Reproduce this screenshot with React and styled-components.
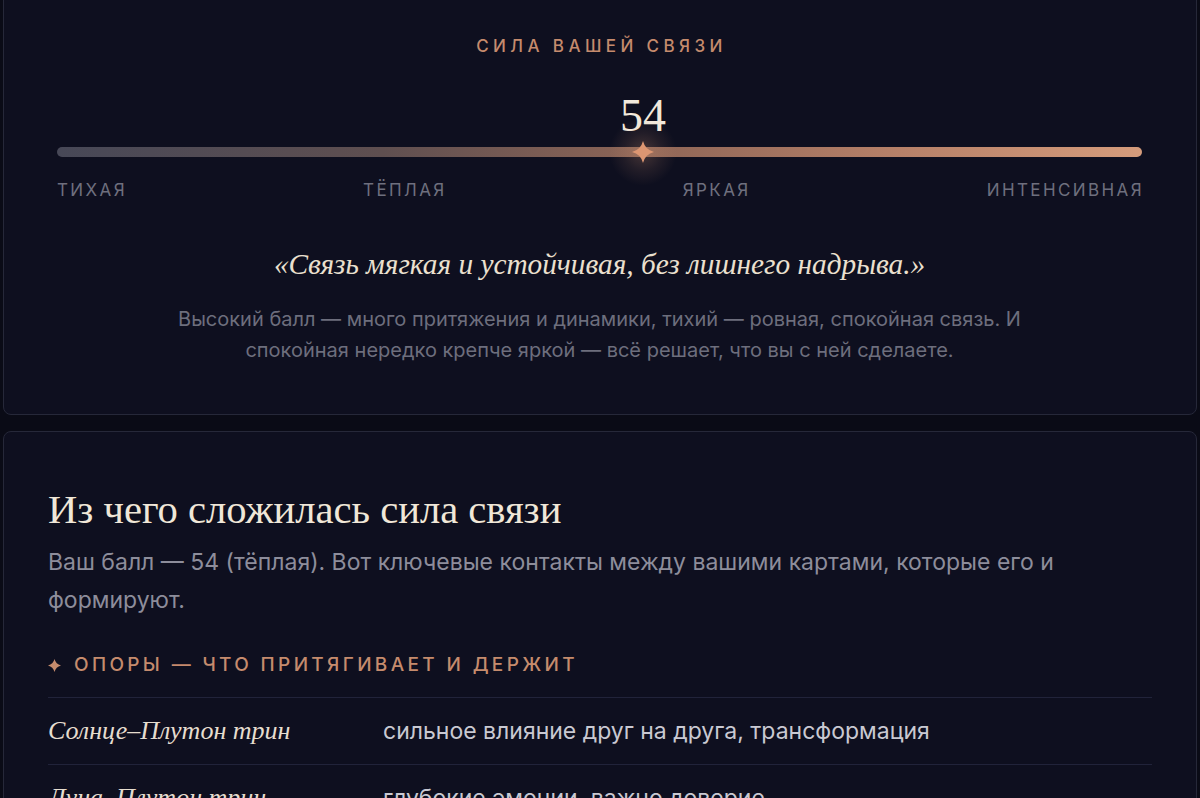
import React from 'react';
import styled, { createGlobalStyle } from 'styled-components';

const GlobalStyle = createGlobalStyle`
  html, body {
    margin: 0;
    padding: 0;
    background: #0a0b16;
    overflow: hidden;
  }
  body {
    font-family: Inter, "Noto Sans", sans-serif;
  }
`;

const Page = styled.div`
  padding: 0 3px;
  display: flex;
  flex-direction: column;
  gap: 16px;
`;

const Card = styled.section`
  background: #0e0f1f;
  border: 1px solid #262839;
  border-radius: 8px;
  padding: ${p => p.$pad};
  margin-top: ${p => p.$offset || 0};
`;

const Eyebrow = styled.div`
  font-size: 17px;
  line-height: 20px;
  letter-spacing: 4.4px;
  color: #c58b6d;
  text-align: center;
  font-weight: 500;
  padding-left: 4px;
`;

const Scale = styled.div`
  margin-top: 91px;
`;

const Track = styled.div`
  position: relative;
  height: 10px;
  border-radius: 5px;
  background: linear-gradient(90deg, #474857 0%, #5f4f50 30%, #8f6657 55%, #b78169 78%, #d59c7c 100%);
`;

const Score = styled.div`
  position: absolute;
  left: ${p => p.$pos}%;
  bottom: calc(100% + 8px);
  transform: translateX(-50%);
  font-family: "Liberation Serif", "DejaVu Serif", serif;
  font-size: 46px;
  line-height: 1;
  color: #f2e9dc;
`;

const Marker = styled.div`
  position: absolute;
  left: ${p => p.$pos}%;
  top: 50%;
  width: 70px;
  height: 70px;
  transform: translate(-50%, -50%);
  display: flex;
  align-items: center;
  justify-content: center;
  background: radial-gradient(circle, rgba(213, 150, 115, 0.28) 0%, rgba(213, 150, 115, 0.1) 38%, rgba(213, 150, 115, 0) 68%);
`;

const ScaleLabels = styled.div`
  margin-top: 23px;
  margin-right: -2px;
  display: flex;
  justify-content: space-between;
  font-size: 17px;
  line-height: 20px;
  letter-spacing: 2.4px;
  color: #6e6f7e;
`;

const Quote = styled.p`
  margin: 46px 0 0;
  text-align: center;
  font-family: "Liberation Serif", "DejaVu Serif", serif;
  font-style: italic;
  font-size: 29.3px;
  line-height: 36px;
  color: #ebe0cf;
`;

const Note = styled.p`
  margin: 22px auto 0;
  max-width: 860px;
  text-align: center;
  font-size: 20px;
  line-height: 31px;
  color: #6d6e7d;
`;

const Heading = styled.h2`
  margin: 0;
  font-family: "Liberation Serif", "DejaVu Serif", serif;
  font-weight: 400;
  font-size: 40.6px;
  line-height: 48px;
  color: #f0e7d8;
`;

const Lead = styled.p`
  margin: 9px 0 0;
  max-width: 1040px;
  font-size: 23px;
  line-height: 38px;
  color: #8d8d9b;
`;

const GroupTitle = styled.div`
  margin-top: 35px;
  display: flex;
  align-items: center;
  gap: 13px;
  font-size: 19px;
  line-height: 22px;
  letter-spacing: 3.35px;
  font-weight: 500;
  color: #c58b6d;
  padding-bottom: 21px;
  border-bottom: 1px solid #21233a;
`;

const Row = styled.div`
  display: grid;
  grid-template-columns: 335px 1fr;
  align-items: center;
  padding: 17px 0;
  border-bottom: 1px solid #21233a;
`;

const Aspect = styled.div`
  font-family: "Liberation Serif", "DejaVu Serif", serif;
  font-style: italic;
  font-size: 26px;
  line-height: 32px;
  color: #e6ddcf;
`;

const Meaning = styled.div`
  font-size: 23px;
  line-height: 32px;
  color: #c9c9d2;
`;

const Star = ({ size, color }) => (
  <svg width={size} height={size} viewBox="0 0 24 24">
    <path
      d="M12 0 Q14.4 9.6 24 12 Q14.4 14.4 12 24 Q9.6 14.4 0 12 Q9.6 9.6 12 0 Z"
      fill={color}
    />
  </svg>
);

const score = 54;
const levels = ['ТИХАЯ', 'ТЁПЛАЯ', 'ЯРКАЯ', 'ИНТЕНСИВНАЯ'];
const supports = [
  { aspect: 'Солнце–Плутон трин', text: 'сильное влияние друг на друга, трансформация' },
  { aspect: 'Луна–Плутон трин', text: 'глубокие эмоции, важно доверие' },
];

export default function App() {
  return (
    <>
      <GlobalStyle />
      <Page>
        <Card $pad="56px 54px 48px 53px" $offset="-21px">
          <Eyebrow>СИЛА ВАШЕЙ СВЯЗИ</Eyebrow>
          <Scale>
            <Track>
              <Score $pos={score}>{score}</Score>
              <Marker $pos={score}>
                <Star size={22} color="#dc9672" />
              </Marker>
            </Track>
            <ScaleLabels>
              {levels.map(l => <span key={l}>{l}</span>)}
            </ScaleLabels>
          </Scale>
          <Quote>«Связь мягкая и устойчивая, без лишнего надрыва.»</Quote>
          <Note>
            Высокий балл — много притяжения и динамики, тихий — ровная, спокойная связь. И
            спокойная нередко крепче яркой — всё решает, что вы с ней сделаете.
          </Note>
        </Card>
        <Card $pad="54px 44px 40px 44px">
          <Heading>Из чего сложилась сила связи</Heading>
          <Lead>
            Ваш балл — 54 (тёплая). Вот ключевые контакты между вашими картами, которые его и
            формируют.
          </Lead>
          <GroupTitle>
            <Star size={13} color="#c58b6d" />
            <span>ОПОРЫ — ЧТО ПРИТЯГИВАЕТ И ДЕРЖИТ</span>
          </GroupTitle>
          {supports.map(s => (
            <Row key={s.aspect}>
              <Aspect>{s.aspect}</Aspect>
              <Meaning>{s.text}</Meaning>
            </Row>
          ))}
        </Card>
      </Page>
    </>
  );
}
